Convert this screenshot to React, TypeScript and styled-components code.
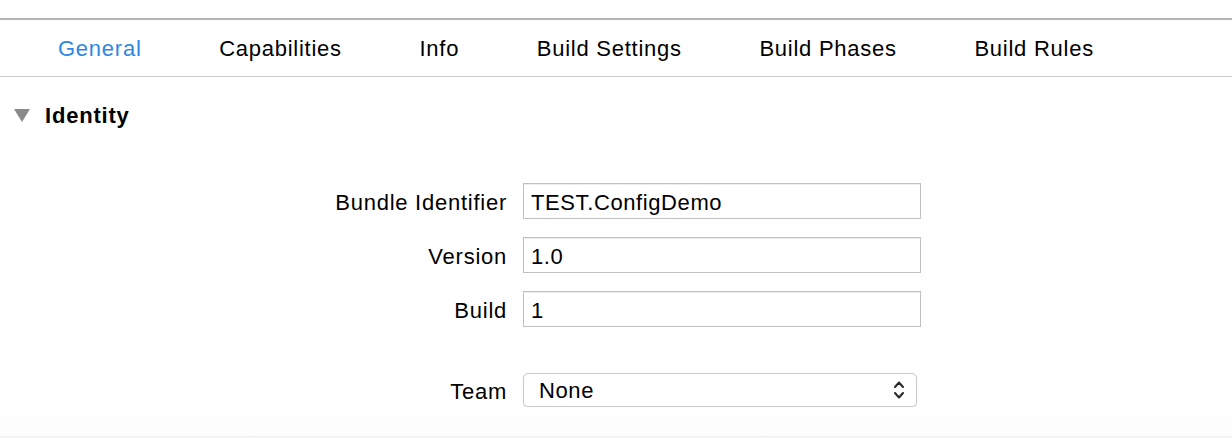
import React from "react"
import styled, { createGlobalStyle } from "styled-components"

const GlobalStyle = createGlobalStyle`
  html, body {
    margin: 0;
    padding: 0;
    background: #ffffff;
  }
  body {
    font-family: "Liberation Sans", Arial, sans-serif;
    color: #000000;
  }
`

const Page = styled.div`
  display: flex;
  flex-direction: column;
  height: 438px;
  overflow: hidden;
`
const TopStrip = styled.div`
  height: 18px;
  border-bottom: 2px solid #b3b3b3;
`
const TabBar = styled.nav`
  display: flex;
  align-items: center;
  gap: 77.6px;
  height: 57px;
  padding-left: 58px;
  padding-top: 2px;
  box-sizing: border-box;
  border-bottom: 1px solid #cbcbcb;
`
const Tab = styled.span<{ $active?: boolean }>`
  font-size: 22px;
  letter-spacing: 0.75px;
  color: ${(p) => (p.$active ? "#2f87e1" : "#000000")};
  white-space: nowrap;
`
const SectionHeader = styled.div`
  display: flex;
  align-items: center;
  gap: 15px;
  height: 32px;
  margin-top: 22px;
  padding-left: 14px;
`
const Disclosure = styled.span`
  width: 0;
  height: 0;
  border-left: 8px solid transparent;
  border-right: 8px solid transparent;
  border-top: 13px solid #8a8a8a;
`
const SectionTitle = styled.h2`
  margin: 0;
  padding-top: 2px;
  font-size: 22px;
  font-weight: bold;
  letter-spacing: 0.8px;
`
const Form = styled.div`
  display: grid;
  grid-template-columns: 507px auto;
  column-gap: 16px;
  row-gap: 18px;
  align-items: center;
  margin-top: 52px;
`
const Label = styled.label<{ $gap?: number }>`
  justify-self: end;
  padding-top: 3px;
  font-size: 22px;
  letter-spacing: 0.75px;
  white-space: nowrap;
  margin-top: ${(p) => p.$gap ?? 0}px;
`
const TextField = styled.div`
  box-sizing: border-box;
  width: 398px;
  height: 36px;
  display: flex;
  align-items: center;
  padding: 3px 0 0 7px;
  border: 1px solid #c0c0c0;
  box-shadow: inset 0 1px 0 #ececec;
  font-size: 22px;
  letter-spacing: 0.6px;
`
const PopUp = styled.div`
  box-sizing: border-box;
  width: 394px;
  height: 34px;
  margin-top: 28px;
  display: flex;
  align-items: center;
  justify-content: space-between;
  padding: 0 11px 0 15px;
  border: 1px solid #cacaca;
  border-radius: 5px;
  box-shadow: 0 1px 1px rgba(0, 0, 0, 0.18);
  font-size: 22px;
  letter-spacing: 0.6px;
`
const PopUpValue = styled.span`
  padding-top: 2px;
`
const Filler = styled.div`
  flex: 1;
  background: linear-gradient(#ffffff, #fcfcfc);
`
const Footer = styled.div`
  height: 1px;
  border-top: 1px solid #f0f0f0;
  background: #f7f7f7;
`

const StepperArrows = () => (
  <svg width="12" height="22" viewBox="0 0 12 22" fill="none">
    <path d="M2 8 L6 3.5 L10 8" stroke="#2a2a2a" strokeWidth="2.1" strokeLinecap="round" strokeLinejoin="round" />
    <path d="M2 14 L6 18.5 L10 14" stroke="#2a2a2a" strokeWidth="2.1" strokeLinecap="round" strokeLinejoin="round" />
  </svg>
)

const tabs = ["General", "Capabilities", "Info", "Build Settings", "Build Phases", "Build Rules"]

const App = (): JSX.Element => {
  return (
    <>
      <GlobalStyle />
      <Page>
        <TopStrip />
        <TabBar>
          {tabs.map((t, i) => (
            <Tab key={t} $active={i === 0}>
              {t}
            </Tab>
          ))}
        </TabBar>
        <SectionHeader>
          <Disclosure />
          <SectionTitle>Identity</SectionTitle>
        </SectionHeader>
        <Form>
          <Label>Bundle Identifier</Label>
          <TextField>TEST.ConfigDemo</TextField>
          <Label>Version</Label>
          <TextField>1.0</TextField>
          <Label>Build</Label>
          <TextField>1</TextField>
          <Label $gap={28}>Team</Label>
          <PopUp>
            <PopUpValue>None</PopUpValue>
            <StepperArrows />
          </PopUp>
        </Form>
        <Filler />
        <Footer />
      </Page>
    </>
  )
}
export default App
